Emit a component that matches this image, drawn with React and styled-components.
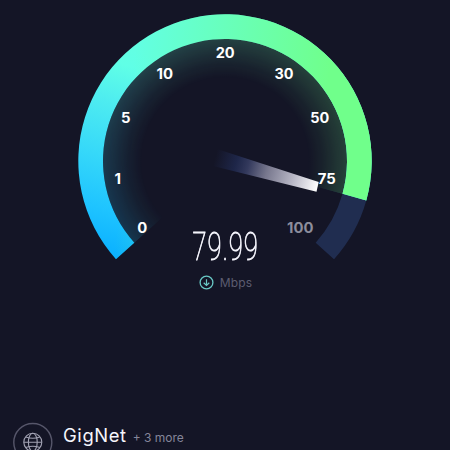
import styled, { createGlobalStyle } from 'styled-components'

const GlobalStyle = createGlobalStyle`
  body {
    margin: 0;
    background: #141526;
    overflow: hidden;
  }
`

const Page = styled.main`
  display: flex;
  flex-direction: column;
  width: 450px;
  height: 450px;
  overflow: hidden;
  background: #141526;
  color: #fff;
  font-family: Inter, 'Liberation Sans', sans-serif;
`

const Meter = styled.section`
  display: grid;
  grid-template-columns: 450px;
  height: 294px;
`

const Dial = styled.svg`
  grid-area: 1 / 1;
  display: block;
`

const DialLabel = styled.text`
  font-family: Inter, 'Liberation Sans', sans-serif;
  font-size: 14.3px;
  font-weight: 700;
  text-anchor: middle;
  fill: ${({ $reached }) => ($reached ? '#fff' : '#8d8d9c')};
`

const Readout = styled.div`
  grid-area: 1 / 1;
  align-self: end;
  display: flex;
  flex-direction: column;
  align-items: center;
  gap: 7px;
  height: 68px;
`

const Speed = styled.div`
  font-family: Roboto, sans-serif;
  font-size: 39.5px;
  font-weight: 100;
  line-height: 41px;
  letter-spacing: 1.4px;
  padding-left: 2px;
  color: #f4f4fc;
  -webkit-text-stroke: 0.9px #f4f4fc;
  transform: scaleX(0.65);
`

const Unit = styled.div`
  display: flex;
  align-items: center;
  gap: 6px;
  height: 16px;
  padding-left: 1px;
  font-size: 12px;
  letter-spacing: 0.2px;
  color: #5c5c70;
`

const Provider = styled.footer`
  display: flex;
  gap: 10px;
  flex: none;
  margin-top: 128px;
  padding-left: 13px;
`

const ProviderIcon = styled.svg`
  flex: none;
`

const ProviderText = styled.div`
  display: flex;
  align-items: baseline;
  gap: 6px;
  height: 26px;
`

const Name = styled.span`
  font-size: 18.4px;
  line-height: 26px;
  letter-spacing: 0.6px;
  color: #f6f6fc;
`

const More = styled.span`
  font-size: 12px;
  color: #85859a;
`

const CX = 225
const CY = 161
const OUTER = 146.7
const INNER = 122
const START = 138
const END = 402
const CURRENT = 375.6

const labels = [
  { value: '0', x: 142.3, y: 232.6, width: 10 },
  { value: '1', x: 117.8, y: 184, width: 6.5 },
  { value: '5', x: 125.7, y: 122.6, width: 9.5 },
  { value: '10', x: 164.8, y: 78.6, width: 16.5 },
  { value: '20', x: 225.2, y: 58.3, width: 19 },
  { value: '30', x: 284, y: 78.6, width: 19 },
  { value: '50', x: 319.7, y: 122.6, width: 19 },
  { value: '75', x: 326.7, y: 184, width: 18 },
  { value: '100', x: 300.2, y: 232.6, width: 26.3 },
]

function point(radius, degrees) {
  const angle = (degrees * Math.PI) / 180
  return `${CX + radius * Math.cos(angle)} ${CY + radius * Math.sin(angle)}`
}

function band(inner, outer, from, to) {
  const large = to - from > 180 ? 1 : 0
  return [
    `M${point(outer, from)}`,
    `A${outer} ${outer} 0 ${large} 1 ${point(outer, to)}`,
    `L${point(inner, to)}`,
    `A${inner} ${inner} 0 ${large} 0 ${point(inner, from)}Z`,
  ].join('')
}

function Gauge() {
  const progress = band(INNER, OUTER, START, CURRENT)
  const glow = band(78, INNER, START, CURRENT)

  return (
    <Dial width="450" height="294" viewBox="0 0 450 294">
      <defs>
        <linearGradient
          id="cool"
          gradientUnits="userSpaceOnUse"
          x1="118"
          y1="255"
          x2="178"
          y2="65"
        >
          <stop offset="0" stopColor="#0cb2ff" />
          <stop offset="0.2" stopColor="#1fc4ff" />
          <stop offset="0.45" stopColor="#36d8f9" />
          <stop offset="0.72" stopColor="#4eecf0" />
          <stop offset="0.92" stopColor="#60ffe6" />
          <stop offset="1" stopColor="#62ffe3" />
        </linearGradient>
        <linearGradient
          id="warm"
          gradientUnits="userSpaceOnUse"
          x1="140"
          y1="0"
          x2="335"
          y2="20"
        >
          <stop offset="0" stopColor="#70ff8b" stopOpacity="0" />
          <stop offset="1" stopColor="#70ff8b" />
        </linearGradient>
        <radialGradient
          id="fade"
          gradientUnits="userSpaceOnUse"
          cx={CX}
          cy={CY}
          r={INNER}
        >
          <stop offset="0.68" stopColor="#fff" stopOpacity="0" />
          <stop offset="0.8" stopColor="#fff" stopOpacity="0.06" />
          <stop offset="1" stopColor="#fff" stopOpacity="0.19" />
        </radialGradient>
        <mask id="glow" maskUnits="userSpaceOnUse" width="450" height="294">
          <rect width="450" height="294" fill="url(#fade)" />
        </mask>
        <linearGradient
          id="needle"
          gradientUnits="userSpaceOnUse"
          x1="215"
          y1="158"
          x2="318"
          y2="187"
        >
          <stop offset="0" stopColor="#202a51" stopOpacity="0" />
          <stop offset="0.2" stopColor="#202a51" stopOpacity="0.8" />
          <stop offset="0.32" stopColor="#343a5d" />
          <stop offset="0.5" stopColor="#77778d" />
          <stop offset="0.75" stopColor="#b7b6c5" />
          <stop offset="1" stopColor="#fff" />
        </linearGradient>
      </defs>
      <g mask="url(#glow)">
        <path d={glow} fill="url(#cool)" />
        <path d={glow} fill="url(#warm)" />
      </g>
      <path d={band(INNER, OUTER, CURRENT, END)} fill="#202d50" />
      <path d={progress} fill="url(#cool)" />
      <path d={progress} fill="url(#warm)" />
      {labels.map(({ value, x, y, width }) => (
        <DialLabel
          key={value}
          x={x}
          y={y}
          textLength={width}
          lengthAdjust="spacingAndGlyphs"
          $reached={value !== '100'}
        >
          {value}
        </DialLabel>
      ))}
      <path d="M217 149L318.7 182L316.5 191.7L213 166Z" fill="url(#needle)" />
    </Dial>
  )
}

function DownloadIcon() {
  return (
    <svg width="15" height="15" viewBox="0 0 15 15" fill="none">
      <circle cx="7.5" cy="7.5" r="6.4" stroke="#69c9c6" strokeWidth="1.3" />
      <path
        d="M7.5 4.2V10.5M4.7 7.8L7.5 10.5L10.3 7.8"
        stroke="#69c9c6"
        strokeWidth="1.2"
      />
    </svg>
  )
}

function GlobeIcon() {
  return (
    <ProviderIcon width="40" height="40" viewBox="0 0 40 40" fill="none">
      <circle cx="19.8" cy="20.5" r="19" stroke="#56566a" strokeWidth="1.4" />
      <g stroke="#a3a3b4" strokeWidth="1.1">
        <circle cx="19.8" cy="20.2" r="9" />
        <ellipse cx="19.8" cy="20.2" rx="4.4" ry="9" />
        <path d="M10.8 20.2H28.8M12.8 15Q19.8 17.4 26.8 15M12.8 25.4Q19.8 23 26.8 25.4" />
      </g>
    </ProviderIcon>
  )
}

export default function App() {
  return (
    <Page>
      <GlobalStyle />
      <Meter>
        <Gauge />
        <Readout>
          <Speed>79.99</Speed>
          <Unit>
            <DownloadIcon />
            Mbps
          </Unit>
        </Readout>
      </Meter>
      <Provider>
        <GlobeIcon />
        <ProviderText>
          <Name>GigNet</Name>
          <More>+ 3 more</More>
        </ProviderText>
      </Provider>
    </Page>
  )
}
